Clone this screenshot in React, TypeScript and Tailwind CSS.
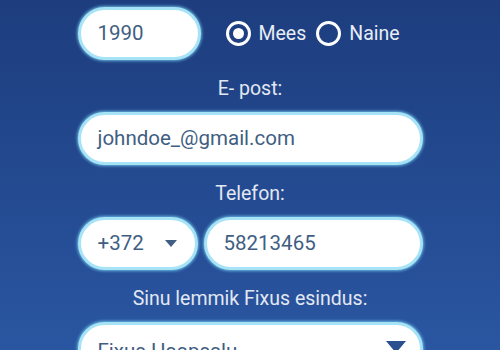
import React from "react";

const field =
  "flex h-[53px] items-center rounded-full border-[3px] border-[#a6e3f6] bg-white px-[17px] text-[20.5px] text-[#3f5e82] shadow-[0_0_3px_1px_rgba(120,210,245,0.8)]";

function Label({ children }: { children: React.ReactNode }) {
  return (
    <div className="pt-[18px] pb-[12px] text-center text-[19.5px] leading-[22px] text-[#e2e8f2]">
      {children}
    </div>
  );
}

function Radio({ checked, label }: { checked?: boolean; label: string }) {
  return (
    <label className="flex items-center gap-[8px]">
      <span className="flex h-[25px] w-[25px] items-center justify-center rounded-full border-[3px] border-white">
        {checked ? <span className="h-[11px] w-[11px] rounded-full bg-white" /> : null}
      </span>
      <span className="text-[19.5px] text-[#e8edf5]">{label}</span>
    </label>
  );
}

function Caret({ big }: { big?: boolean }) {
  return big ? (
    <svg width="20" height="12" viewBox="0 0 20 12" className="shrink-0">
      <path d="M0 0 H20 L10 12 Z" fill="#2d4f8f" />
    </svg>
  ) : (
    <svg width="12" height="7" viewBox="0 0 12 7" className="shrink-0">
      <path d="M0 0 H12 L6 7 Z" fill="#3f5e82" />
    </svg>
  );
}

export default function App() {
  return (
    <div
      className="h-[350px] w-[500px] overflow-hidden bg-gradient-to-b from-[#1d3d7e] to-[#2a56a1]"
      style={{ fontFamily: "Roboto, 'Noto Sans', sans-serif" }}
    >
      <div className="mx-auto w-[345px] pt-[7px]">
        <div className="flex items-center">
          <div className={`${field} w-[123px]`}>1990</div>
          <div className="ml-[25px] flex items-center gap-[10px]">
            <Radio checked label="Mees" />
            <Radio label="Naine" />
          </div>
        </div>

        <Label>E- post:</Label>
        <div className={field}>johndoe_@gmail.com</div>

        <Label>Telefon:</Label>
        <div className="flex gap-[6px]">
          <div className={`${field} w-[120px] justify-between pr-[18px]`}>
            <span>+372</span>
            <Caret />
          </div>
          <div className={`${field} flex-1`}>58213465</div>
        </div>

        <Label>Sinu lemmik Fixus esindus:</Label>
        <div className={`${field} items-start justify-between pr-[14px] pt-[11px]`}>
          <span>Fixus Haapsalu</span>
          <span className="pt-[5px]">
            <Caret big />
          </span>
        </div>
      </div>
    </div>
  );
}
